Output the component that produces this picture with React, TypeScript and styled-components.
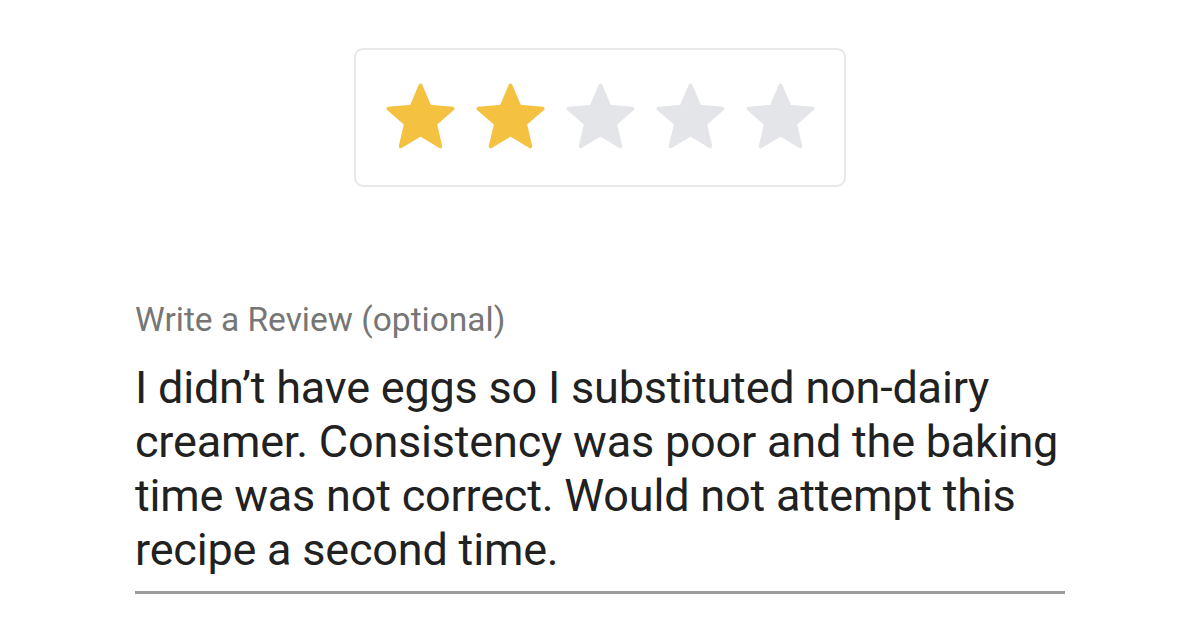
import React from "react";
import styled, { createGlobalStyle } from "styled-components";

const Global = createGlobalStyle`
  html, body { margin: 0; padding: 0; background: #ffffff; }
  body { font-family: Roboto, "Noto Sans", sans-serif; }
`;

const Page = styled.div`
  width: 1200px;
  height: 633px;
  display: flex;
  flex-direction: column;
  align-items: center;
  padding-top: 48px;
  box-sizing: border-box;
`;

const RatingCard = styled.div`
  width: 492px;
  height: 139px;
  box-sizing: border-box;
  border: 2px solid #e8e8ea;
  border-radius: 9px;
  display: flex;
  align-items: center;
  justify-content: center;
  gap: 13px;
`;

const StarSvg = styled.svg`
  width: 77px;
  height: 77px;
  display: block;
`;

const ReviewSection = styled.div`
  width: 930px;
  margin-top: 113px;
  display: flex;
  flex-direction: column;
`;

const Label = styled.div`
  font-family: Roboto, sans-serif;
  font-size: 33.5px;
  line-height: 40px;
  color: #767676;
`;

const ReviewText = styled.div`
  margin-top: 21px;
  font-family: Roboto, sans-serif;
  font-size: 45px;
  letter-spacing: -0.2px;
  line-height: 54px;
  color: #212121;
  padding-bottom: 14px;
  border-bottom: 3px solid #9a9a9a;
`;

const Star: React.FC<{ filled: boolean }> = ({ filled }) => {
  const c = filled ? "#F4C140" : "#E4E5E9";
  return (
    <StarSvg viewBox="0 0 24 24">
      <path
        d="M12 17.27L18.18 21l-1.64-7.03L22 9.24l-7.19-.61L12 2 9.19 8.63 2 9.24l5.46 4.73L5.82 21z"
        fill={c}
        stroke={c}
        strokeWidth={1.2}
        strokeLinejoin="round"
      />
    </StarSvg>
  );
};

export default function App() {
  const rating = 2;
  return (
    <>
      <Global />
      <Page>
        <RatingCard>
          {[1, 2, 3, 4, 5].map((i) => (
            <Star key={i} filled={i <= rating} />
          ))}
        </RatingCard>
        <ReviewSection>
          <Label>Write a Review (optional)</Label>
          <ReviewText>
            I didn’t have eggs so I substituted non-dairy creamer. Consistency was poor and the baking time was not correct. Would not attempt this recipe a second time.
          </ReviewText>
        </ReviewSection>
      </Page>
    </>
  );
}
